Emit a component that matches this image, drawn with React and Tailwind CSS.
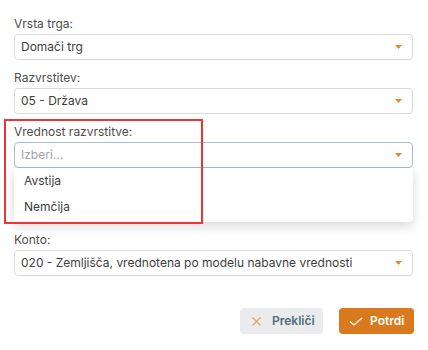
import React from 'react';

function Caret() {
  return (
    <svg width="7" height="4" viewBox="0 0 7 4" className="shrink-0">
      <path d="M0 0H7L3.5 4Z" fill="#dd8a2e" />
    </svg>
  );
}

function SelectBox({ value, placeholder, focused }) {
  return (
    <div
      className={
        focused
          ? 'h-[26px] flex items-center justify-between pl-[6px] pr-[10px] border border-[#a9bec8] rounded-[4px] bg-white'
          : 'h-[26px] flex items-center justify-between pl-[6px] pr-[10px] border border-[#dadada] rounded-[4px] bg-white'
      }
    >
      {value ? (
        <span className="text-[12px] text-[#3d3d3d] truncate">{value}</span>
      ) : (
        <span className="text-[12px] text-[#a3a3a3]">{placeholder}</span>
      )}
      <Caret />
    </div>
  );
}

function Field({ label, children }) {
  return (
    <div className="mb-2">
      <div className="h-5 leading-5 text-[12px] text-[#4d4d4d]">{label}</div>
      {children}
    </div>
  );
}

export default function App() {
  const options = ['Avstija', 'Nemčija'];

  return (
    <div className="relative w-[428px] h-[350px] bg-white pl-[14px] pr-[15px] pt-[14px] font-['Inter',sans-serif] overflow-hidden">
      <Field label="Vrsta trga:">
        <SelectBox value="Domači trg" />
      </Field>
      <Field label="Razvrstitev:">
        <SelectBox value="05 - Država" />
      </Field>
      <Field label="Vrednost razvrstitve:">
        <div className="relative">
          <SelectBox placeholder="Izberi..." focused />
          <div className="absolute left-0 right-0 top-full z-10 bg-white rounded-b-[4px] pb-[2px] shadow-[0_4px_12px_rgba(0,0,0,0.16)]">
            {options.map((o) => (
              <div key={o} className="h-[26px] flex items-center px-[10px] text-[12px] text-[#3d3d3d]">
                {o}
              </div>
            ))}
          </div>
        </div>
      </Field>
      {/* row hidden under the open menu */}
      <div className="h-[54px]" />
      <Field label="Konto:">
        <SelectBox value="020 - Zemljišča, vrednotena po modelu nabavne vrednosti" />
      </Field>

      <div className="mt-8 -mr-px flex justify-end gap-4">
        <button className="w-[83px] h-[26px] flex items-center gap-[11px] pl-[12px] rounded-[4px] bg-[#eaebec] text-[12px] font-semibold text-[#4f6d7a]">
          <svg width="9" height="9" viewBox="0 0 9 9">
            <path d="M0.5 0.5L8.5 8.5M8.5 0.5L0.5 8.5" stroke="#e6a06a" strokeWidth="1.1" />
          </svg>
          Prekliči
        </button>
        <button className="w-[75px] h-[26px] flex items-center gap-[7px] pl-[10px] rounded-[4px] bg-[#d97a1e] text-[12px] font-semibold text-white">
          <svg width="14" height="9" viewBox="0 0 14 9">
            <path d="M1 4.5L5 8L13 1" stroke="#ffffff" strokeWidth="1.3" fill="none" />
          </svg>
          Potrdi
        </button>
      </div>

      <div className="absolute left-[4px] top-[119px] w-[199px] h-[105px] border-2 border-[#ee3535] z-20 pointer-events-none" />
    </div>
  );
}
